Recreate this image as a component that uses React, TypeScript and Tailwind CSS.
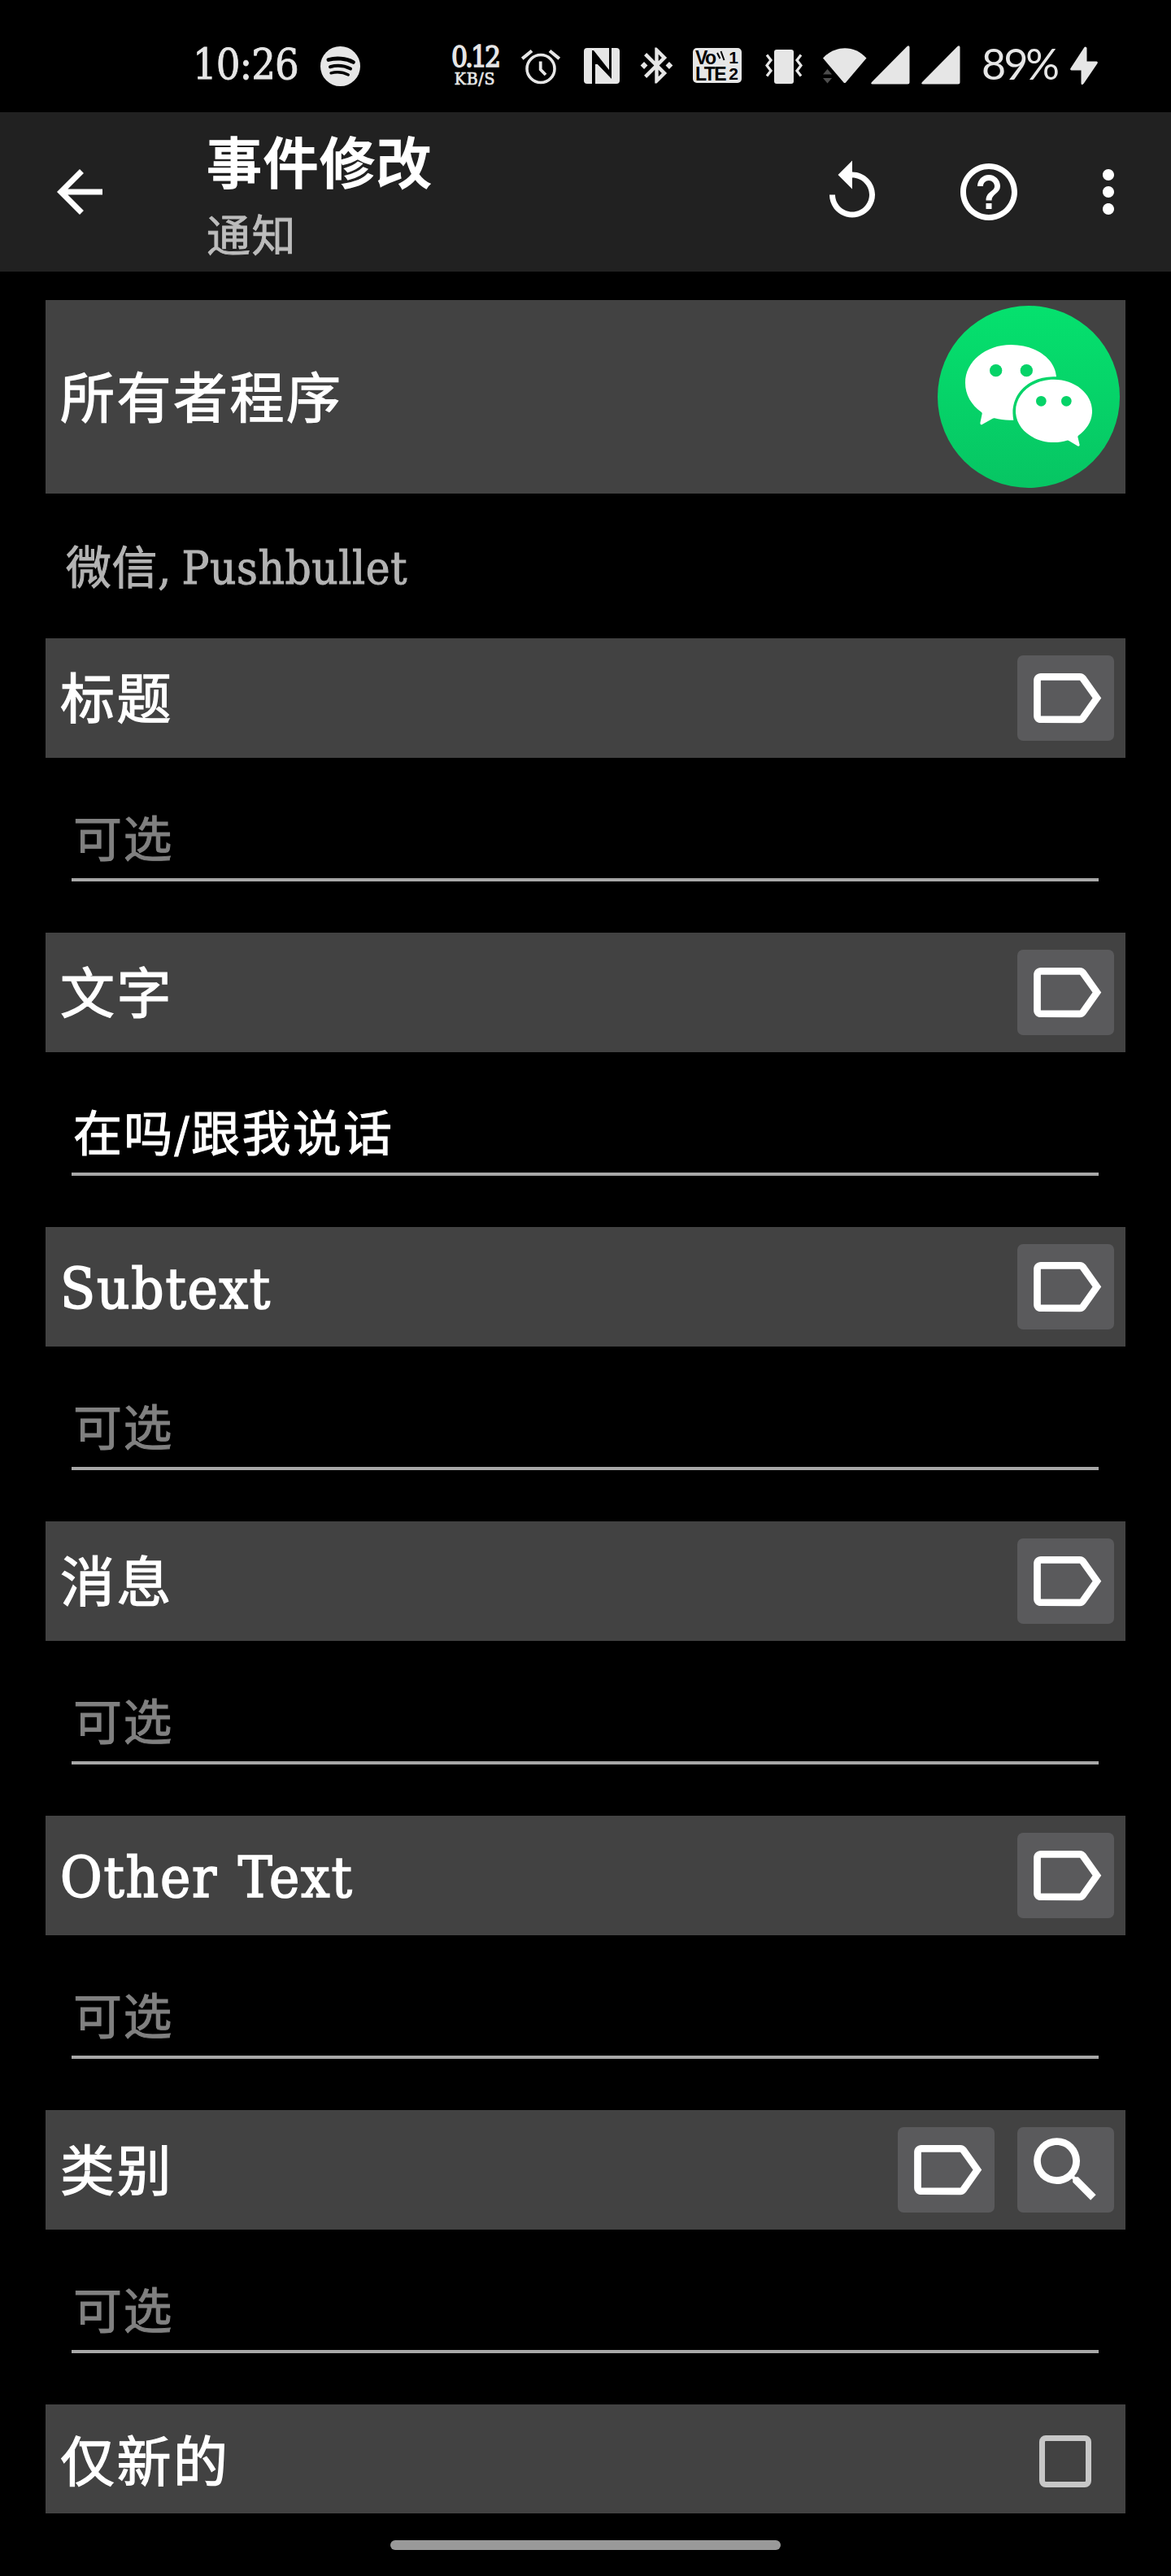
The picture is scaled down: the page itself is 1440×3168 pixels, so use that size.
import type { ReactNode } from "react";
import {
  MdArrowBack,
  MdBluetoothConnected,
  MdHelpOutline,
  MdLabelOutline,
  MdMoreVert,
  MdReplay,
  MdSearch,
} from "react-icons/md";

const INK = "#e6e6e6";

function SpotifyIcon() {
  return (
    <svg width="49" height="49" viewBox="0 0 49 49" fill="none" stroke="#000" strokeLinecap="round">
      <circle cx="24.5" cy="24.5" r="24.5" fill={INK} stroke="none" />
      <path d="M10 16.5C19 14 31 14.5 40.5 19.5" strokeWidth="4.8" />
      <path d="M12 25.2C20 23 29 23.5 37 27.5" strokeWidth="4" />
      <path d="M13 32.8C20 31 27.5 31.5 34.3 35" strokeWidth="3.3" />
    </svg>
  );
}

function AlarmIcon() {
  return (
    <svg width="48" height="45" viewBox="0 0 48 45" fill="none" stroke={INK}>
      <circle cx="24" cy="25.5" r="17" strokeWidth="3.6" />
      <path d="M23.7 16.5V26.5L30 33" strokeWidth="3.8" />
      <path d="M1.2 13.2L13 3.5M35 3.5L46.8 13.2" strokeWidth="4.2" />
    </svg>
  );
}

function NfcIcon() {
  return (
    <svg width="44" height="44" viewBox="0 0 44 44">
      <rect width="44" height="44" rx="4" fill={INK} />
      <path d="M10 3H12L27 22L31 27V0H34V38L17 20H14V44H10Z" fill="#000" />
      <path d="M14 13L28 29V31L17 20H14Z" fill="#000" />
    </svg>
  );
}

function VolteBadge() {
  return (
    <div className="relative flex h-[43px] w-[60px] justify-between rounded-[5px] bg-[#e6e6e6] pt-[2px] pr-[4px] pl-[3px] font-['Liberation_Sans'] font-bold text-black">
      <p className="w-[36px] text-[23px] leading-[20px] tracking-[-1.6px] whitespace-nowrap">
        Vo
        <br />
        LTE
      </p>
      <p className="text-[21px] leading-[20px]">
        1<br />2
      </p>
      <svg className="absolute top-[3px] left-[29px]" width="12" height="14" viewBox="0 0 12 14" fill="none" stroke="#000" strokeWidth="2">
        <path d="M1 3L4.5 10M5.5 1L9.5 12" />
      </svg>
    </div>
  );
}

function VibrateIcon() {
  return (
    <svg width="46" height="44" viewBox="0 0 46 44" fill="none" stroke={INK} strokeWidth="3.2">
      <rect x="11" y="2" width="24" height="42" rx="3" fill={INK} stroke="none" />
      <path d="M2 8.5L7 15L2 21.5L7 28L2 34.5M44 8.5L39 15L44 21.5L39 28L44 34.5" />
    </svg>
  );
}

function WifiIcon() {
  return (
    <svg width="54" height="44" viewBox="0 0 54 44">
      <path d="M0 12.5C15-4 39-4 53.5 12.5L28 42.5Q26.8 43.5 25.5 42.5Z" fill={INK} />
      <path d="M0 32.5L5.5 26L11 32.5ZM0 37L5.5 43.5L11 37Z" fill="#4d4d4d" />
    </svg>
  );
}

function SignalIcon() {
  return (
    <svg width="48" height="48" viewBox="0 0 48 48">
      <path d="M1 45L44.5 1Q47-1 47.5 2V45Q47.5 47.5 45 47.5H2Q-1 47.5 1 45Z" fill={INK} />
    </svg>
  );
}

function BoltIcon() {
  return (
    <svg width="34" height="48" viewBox="0 0 34 48">
      <path d="M17.5 1Q19.5-.5 20.5 2V18.5H32.5Q34.5 19 33.5 21L16.5 46Q14 48.5 13.5 45.5V29.5H1.5Q-.5 29 .5 27Z" fill={INK} />
    </svg>
  );
}

function WeChatLogo() {
  return (
    <svg width="224" height="224" viewBox="0 0 672 672">
      <defs>
        <linearGradient id="wechat-green" x1="0" y1="0" x2="0" y2="1">
          <stop offset="0" stopColor="#05e16e" />
          <stop offset="1" stopColor="#07c563" />
        </linearGradient>
      </defs>
      <circle cx="336" cy="336" r="336" fill="url(#wechat-green)" />
      <path
        d="M271 144C362 144 434 196 438 262C338 256 262 328 280 422C254 424 232 420 210 415Q207 414 203 416L163 439Q157 440 157 433L164 399Q165 395 161 392C124 365 102 328 102 284C102 207 176 144 271 144Z"
        fill="#fff"
      />
      <path
        d="M429 272C507 272 570 324 570 389C570 426 550 457 519 479Q517 481 517 484L524 514Q524 519 518 518L484 498Q481 496 477 497C462 502 446 504 429 504C351 504 288 453 288 389C288 324 351 272 429 272Z"
        fill="#fff"
      />
      <g fill="#06d368">
        <circle cx="215" cy="239" r="23" />
        <circle cx="328" cy="239" r="23" />
        <circle cx="382" cy="352" r="19" />
        <circle cx="475" cy="352" r="19" />
      </g>
    </svg>
  );
}

function StatusBar() {
  return (
    <header className="flex h-[138px] items-start text-[#e6e6e6]">
      <span className="mt-[49px] ml-[237px] w-[157px] text-[52px] leading-[60px] tracking-[-1px] whitespace-nowrap [-webkit-text-stroke:0.8px_currentColor]">
        10:26
      </span>
      <div className="mt-[57px]"><SpotifyIcon /></div>
      <div className="mt-[51px] ml-[105px] flex w-[72px] flex-col items-center whitespace-nowrap">
        <span className="text-[35px] leading-[38px] tracking-[-3px] [-webkit-text-stroke:1.4px_currentColor]">0.12</span>
        <span className="text-[21px] leading-[16px] tracking-[0.8px] [-webkit-text-stroke:0.7px_currentColor]">KB/S</span>
      </div>
      <div className="mt-[59px] ml-[21px]"><AlarmIcon /></div>
      <div className="mt-[59px] ml-[29px]"><NfcIcon /></div>
      <MdBluetoothConnected className="mt-[54px] ml-[19px] size-[53px]" />
      <div className="mt-[59px] ml-[18px]"><VolteBadge /></div>
      <div className="mt-[59px] ml-[29px]"><VibrateIcon /></div>
      <div className="mt-[59px] ml-[25px]"><WifiIcon /></div>
      <div className="mt-[56px] ml-[5px]"><SignalIcon /></div>
      <div className="mt-[56px] ml-[14px]"><SignalIcon /></div>
      <span className="mt-[48px] ml-[26px] w-[109px] font-['Lato'] text-[52px] leading-[60px] tracking-[-3px] whitespace-nowrap">89%</span>
      <div className="mt-[57px]"><BoltIcon /></div>
    </header>
  );
}

function AppBar() {
  return (
    <nav className="flex h-[196px] items-center bg-[#212121] text-white">
      <MdArrowBack className="ml-[56px] size-[84px]" />
      <div className="ml-[114px] flex-1 pt-[14px]">
        <h1 className="text-[68px] leading-[98px] font-medium tracking-[1.5px] [-webkit-text-stroke:1.6px_currentColor]">事件修改</h1>
        <p className="text-[54px] leading-[80px] tracking-[1.5px] text-[#bcbcbc] [-webkit-text-stroke:0.8px_currentColor]">通知</p>
      </div>
      <MdReplay className="mr-[84px] size-[84px]" />
      <MdHelpOutline className="mr-[63px] size-[84px]" />
      <MdMoreVert className="mr-[35px] size-[84px]" />
    </nav>
  );
}

function CardTitle({ children }: { children: ReactNode }) {
  return (
    <h2 className="flex-1 pt-[5px] text-[67px] leading-[98px] tracking-[2.5px] text-white [-webkit-text-stroke:1.3px_currentColor]">
      {children}
    </h2>
  );
}

function IconButton({ children }: { children: ReactNode }) {
  return (
    <button className="flex h-[105px] w-[119px] items-center justify-center rounded-[7px] bg-[#5a5a5c] text-white">
      {children}
    </button>
  );
}

type Field = { label: string; value?: string; latin?: boolean; search?: boolean };

const FIELDS: Field[] = [
  { label: "标题" },
  { label: "文字", value: "在吗/跟我说话" },
  { label: "Subtext", latin: true },
  { label: "消息" },
  { label: "Other Text", latin: true },
  { label: "类别", search: true },
];

function FieldSection({ label, value, latin, search }: Field) {
  return (
    <section>
      <div className="flex h-[147px] items-center gap-[28px] bg-[#424242] pr-[14px] pl-[18px]">
        <CardTitle>
          {latin ? (
            <span className="text-[70px] tracking-[1.8px] [word-spacing:3px] [-webkit-text-stroke:1.7px_currentColor]">{label}</span>
          ) : (
            label
          )}
        </CardTitle>
        <IconButton><MdLabelOutline className="size-[105px]" /></IconButton>
        {search && <IconButton><MdSearch className="size-[105px]" /></IconButton>}
      </div>
      <div className="h-[215px] pt-[58px] pr-[33px] pl-[32px]">
        <div className="h-[94px] border-b-4 border-[#a8a8a8] pt-px pl-[2px] text-[60px] leading-[84px] tracking-[1.5px] whitespace-nowrap [-webkit-text-stroke:1px_currentColor]">
          {value ? <p className="tracking-[2.3px] text-white">{value}</p> : <p className="text-[#808080]">可选</p>}
        </div>
      </div>
    </section>
  );
}

export default function App() {
  return (
    <div className="flex h-[3168px] w-[1440px] flex-col overflow-hidden bg-black font-['DejaVu_Serif_Condensed','DejaVu_Serif','Noto_Sans_CJK_SC',serif] [font-stretch:condensed]">
      <StatusBar />
      <AppBar />
      <main className="mx-[56px] mt-[35px]">
        <div className="flex h-[238px] items-center justify-between bg-[#424242] pr-[7px] pl-[18px]">
          <CardTitle>所有者程序</CardTitle>
          <WeChatLogo />
        </div>
        <p className="h-[178px] pt-[52px] pl-[25px] text-[56px] leading-[80px] tracking-[0.6px] text-[#b3b3b3] [-webkit-text-stroke:1px_currentColor] [word-spacing:-4px]">
          微信, Pushbullet
        </p>
        {FIELDS.map((field) => (
          <FieldSection key={field.label} {...field} />
        ))}
        <div className="flex h-[134px] items-center justify-between bg-[#424242] pt-[5px] pr-[42px] pl-[18px]">
          <CardTitle>仅新的</CardTitle>
          <div className="size-[64px] rounded-[8px] border-[7px] border-[#c8c8c8]" />
        </div>
      </main>
      <div className="mx-auto mt-[33px] h-[12px] w-[480px] rounded-full bg-[#999]" />
    </div>
  );
}
